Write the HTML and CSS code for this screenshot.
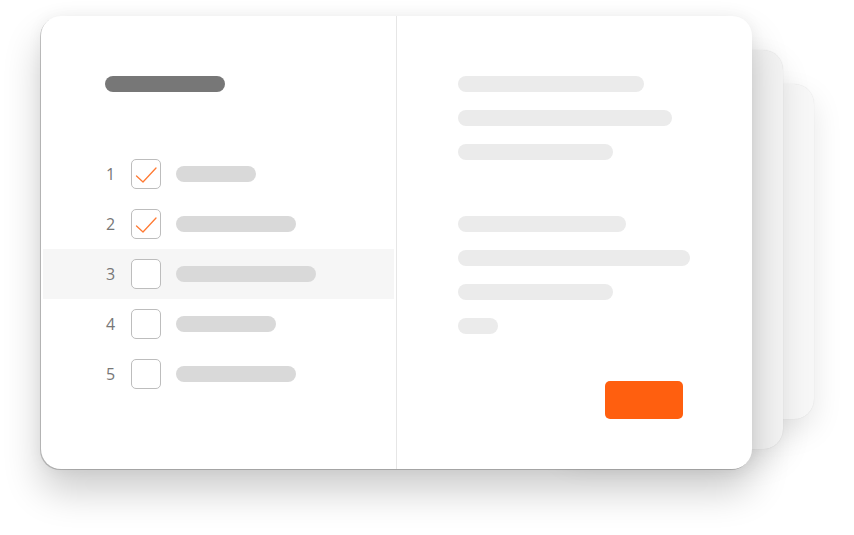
FILE: index.html
```html
<!DOCTYPE html>
<html>
<head>
<meta charset="utf-8">
<link rel="stylesheet" href="styles.css">
</head>
<body>
<div class="stage">
  <div class="card back back-3"></div>
  <div class="card back back-2"></div>
  <div class="card main">
    <div class="pane left">
      <div class="title-bar"></div>
      <ul class="list">
        <li class="row"><span class="num">1</span><span class="box checked"><svg viewBox="0 0 30 30" width="30" height="30"><path d="M5.5 17 L12 23 L25 9" fill="none" stroke="#ff7a33" stroke-width="1.3" stroke-linecap="round" stroke-linejoin="round"/></svg></span><span class="bar w80"></span></li>
        <li class="row"><span class="num">2</span><span class="box checked"><svg viewBox="0 0 30 30" width="30" height="30"><path d="M5.5 17 L12 23 L25 9" fill="none" stroke="#ff7a33" stroke-width="1.3" stroke-linecap="round" stroke-linejoin="round"/></svg></span><span class="bar w120"></span></li>
        <li class="row active"><span class="num">3</span><span class="box"></span><span class="bar w140"></span></li>
        <li class="row"><span class="num">4</span><span class="box"></span><span class="bar w100"></span></li>
        <li class="row"><span class="num">5</span><span class="box"></span><span class="bar w120"></span></li>
      </ul>
    </div>
    <div class="pane right">
      <div class="lines">
        <span class="line w186"></span>
        <span class="line w214"></span>
        <span class="line w155"></span>
      </div>
      <div class="lines second">
        <span class="line w168"></span>
        <span class="line w232"></span>
        <span class="line w155"></span>
        <span class="line w40"></span>
      </div>
      <div class="actions"><span class="btn"></span></div>
    </div>
  </div>
</div>
</body>
</html>
```

FILE: styles.css
```css
html, body {
  margin: 0;
  padding: 0;
  background: #ffffff;
  font-family: "Open Sans", "Liberation Sans", sans-serif;
}
.stage {
  position: relative;
  width: 854px;
  height: 535px;
  overflow: hidden;
}
.card {
  position: absolute;
  border-radius: 20px;
  box-sizing: border-box;
}
.back-3 {
  left: 600px;
  top: 84px;
  width: 214px;
  height: 335px;
  background: #f7f7f7;
  box-shadow: 0 12px 30px rgba(0,0,0,0.10), 0 0 1px rgba(0,0,0,0.12);
}
.back-2 {
  left: 560px;
  top: 50px;
  width: 223px;
  height: 399px;
  background: #f3f3f3;
  box-shadow: 0 12px 30px rgba(0,0,0,0.11), 0 0 1px rgba(0,0,0,0.14);
}
.main {
  left: 41px;
  top: 16px;
  width: 711px;
  height: 453px;
  background: #ffffff;
  display: flex;
  box-shadow: -1px 1px 0 rgba(0,0,0,0.2), 0 22px 38px rgba(0,0,0,0.2), 0 0 16px rgba(0,0,0,0.05);
  overflow: hidden;
}
.pane.left {
  width: 356px;
  border-right: 1px solid #e6e6e6;
  padding-top: 60px;
  box-sizing: border-box;
}
.title-bar {
  margin-left: 64px;
  width: 120px;
  height: 16px;
  border-radius: 8px;
  background: #777777;
}
.list {
  list-style: none;
  margin: 57px 0 0 0;
  padding: 0;
}
.row {
  height: 50px;
  display: flex;
  align-items: center;
  padding-left: 60px;
  margin-left: 2px;
  margin-right: 2px;
}
.row.active {
  background: #f6f6f6;
}
.num {
  width: 28px;
  font-size: 16px;
  font-weight: 500;
  color: #777777;
  padding-left: 3px;
  box-sizing: border-box;
}
.box {
  width: 30px;
  height: 30px;
  border: 1px solid #bdbdbd;
  border-radius: 5px;
  box-sizing: border-box;
  background: #fff;
  position: relative;
}
.box svg {
  position: absolute;
  left: -1px;
  top: -1px;
}
.bar {
  margin-left: 15px;
  height: 16px;
  border-radius: 8px;
  background: #d9d9d9;
}
.w80 { width: 80px; }
.w100 { width: 100px; }
.w120 { width: 120px; }
.w140 { width: 140px; }
.pane.right {
  flex: 1;
  padding: 60px 0 0 61px;
  display: flex;
  flex-direction: column;
}
.lines {
  display: flex;
  flex-direction: column;
  gap: 18px;
}
.lines.second {
  margin-top: 56px;
}
.line {
  display: block;
  height: 16px;
  border-radius: 8px;
  background: #ebebeb;
}
.w186 { width: 186px; }
.w214 { width: 214px; }
.w155 { width: 155px; }
.w168 { width: 168px; }
.w232 { width: 232px; }
.w40 { width: 40px; }
.actions {
  margin-top: 47px;
  padding-left: 147px;
}
.btn {
  display: block;
  width: 78px;
  height: 38px;
  border-radius: 5px;
  background: #ff5f0f;
}
```
